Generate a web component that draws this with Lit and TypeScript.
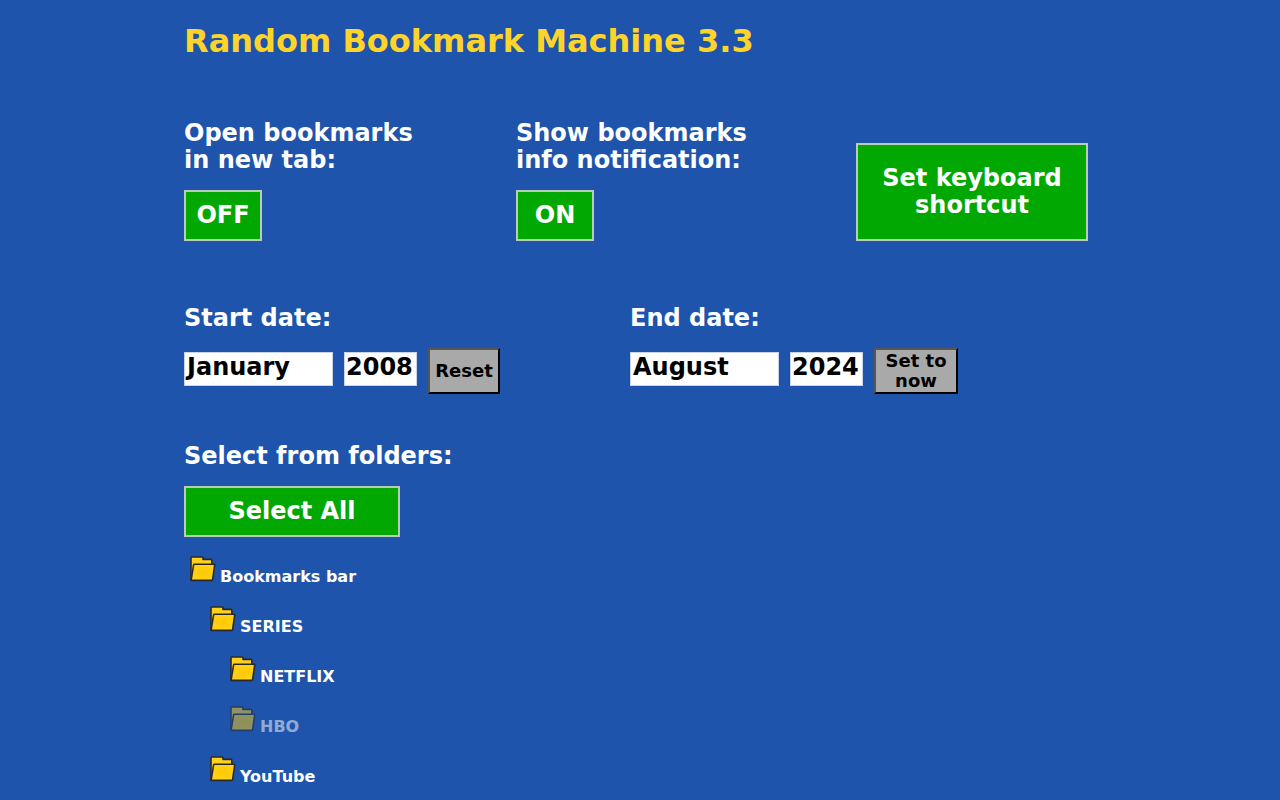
import { LitElement, html, css, svg } from "lit";
import { customElement, state } from "lit/decorators.js";
import { classMap } from "lit/directives/class-map.js";

interface Folder {
  name: string;
  depth: number;
  selected: boolean;
}

const MONTHS = [
  "January", "February", "March", "April", "May", "June", "July",
  "August", "September", "October", "November", "December",
];

const folderShapes = svg`
  <path d="M1 24.5V1.7Q1 1 1.7 1H12.2Q13 1 13 1.8V3.4H21Q21.8 3.4 21.8 4.2V8.5"
    fill="#ffd21a" stroke="#29292d" stroke-width="1.6" stroke-linejoin="round"/>
  <path d="M4.4 8.2H24Q24.8 8.2 24.7 8.9L22.6 23.6Q22.5 24.4 21.8 24.4H1.8Q1.1 24.4 1.2 23.6L3.6 8.9Q3.7 8.2 4.4 8.2Z"
    fill="url(#front)" stroke="#29292d" stroke-width="1.6" stroke-linejoin="round"/>`;

@customElement("app-root")
export class AppRoot extends LitElement {
  @state() private newTab = false;
  @state() private notify = true;
  @state() private startMonth = "January";
  @state() private startYear = "2008";
  @state() private endMonth = "August";
  @state() private endYear = "2024";
  @state() private folders: Folder[] = [
    { name: "Bookmarks bar", depth: 0, selected: true },
    { name: "SERIES", depth: 1, selected: true },
    { name: "NETFLIX", depth: 2, selected: true },
    { name: "HBO", depth: 2, selected: false },
    { name: "YouTube", depth: 1, selected: true },
  ];

  static styles = css`
    :host {
      display: block;
      box-sizing: border-box;
      min-height: 100vh;
      background: #1e54ab;
      color: #fff;
      font: bold 24px/27px "DejaVu Sans", sans-serif;
    }
    * { box-sizing: border-box; }
    .page { max-width: 912px; margin: 0 auto; padding-top: 21px; }
    .title { margin: 0 0 59px; font-size: 32px; line-height: 40px; color: #ffd42a; }
    .options {
      display: grid;
      grid-template-columns: 332fr 340fr 240fr;
      align-items: end;
      margin-bottom: 64px;
    }
    .dates {
      display: grid;
      grid-template-columns: 446fr 466fr;
      margin-bottom: 49px;
    }
    .label { display: block; margin: 0 0 16px; font: inherit; }
    .controls { display: flex; align-items: center; gap: 11px; }
    button { font: inherit; cursor: pointer; }
    .green {
      display: block;
      padding: 10px 8px;
      border: 2px solid #b8ccb8;
      background: #02a802;
      color: #fff;
    }
    .toggle { width: 78px; }
    .shortcut { width: 232px; min-height: 98px; }
    .all { width: 216px; }
    .field {
      height: 34px;
      margin: 0 0 4px;
      padding: 0 1px 4px;
      border: 1px solid #c8d4ea;
      border-radius: 0;
      background: #fff;
      color: #000;
      font: inherit;
      appearance: none;
    }
    .month { width: 149px; padding: 0 0 4px; text-indent: 2px; }
    .year { width: 73px; }
    .gray {
      height: 46px;
      padding: 0;
      border: 2px solid;
      border-color: #555 #000 #000 #555;
      background: #a9a9a9;
      color: #000;
      font-size: 18px;
      line-height: 20px;
    }
    .now { width: 84px; }
    .reset { width: 72px; }
    .folders { margin: 0; padding: 19px 0 0; list-style: none; }
    .folder {
      display: flex;
      align-items: baseline;
      gap: 4px;
      height: 50px;
      padding: 0 0 0 6px;
      border: 0;
      background: none;
      color: #fff;
      font-size: 16px;
      line-height: 20px;
    }
    .depth-1 { margin-left: 20px; }
    .depth-2 { margin-left: 40px; }
    .off { opacity: 0.5; }
    .icon { display: block; width: 26px; height: 26px; }
  `;

  private monthSelect(id: string, value: string, set: (v: string) => void) {
    return html`<select class="field month" id=${id}
      @change=${(e: Event) => set((e.target as HTMLSelectElement).value)}>
      ${MONTHS.map((m) => html`<option ?selected=${m === value}>${m}</option>`)}
    </select>`;
  }

  private toggleFolder(index: number) {
    this.folders = this.folders.map((f, i) =>
      i === index ? { ...f, selected: !f.selected } : f);
  }

  private resetStart() {
    this.startMonth = "January";
    this.startYear = "2008";
  }

  private setNow() {
    const now = new Date();
    this.endMonth = MONTHS[now.getMonth()];
    this.endYear = String(now.getFullYear());
  }

  render() {
    return html`
      <main class="page">
        <h1 class="title">Random Bookmark Machine 3.3</h1>
        <section class="options">
          <div>
            <label class="label" for="new-tab">Open bookmarks<br>in new tab:</label>
            <button class="green toggle" id="new-tab"
              @click=${() => (this.newTab = !this.newTab)}>${this.newTab ? "ON" : "OFF"}</button>
          </div>
          <div>
            <label class="label" for="notify">Show bookmarks<br>info notification:</label>
            <button class="green toggle" id="notify"
              @click=${() => (this.notify = !this.notify)}>${this.notify ? "ON" : "OFF"}</button>
          </div>
          <button class="green shortcut">Set keyboard shortcut</button>
        </section>
        <section class="dates">
          <div>
            <label class="label" for="start-month">Start date:</label>
            <div class="controls">
              ${this.monthSelect("start-month", this.startMonth, (v) => (this.startMonth = v))}
              <input class="field year" aria-label="Start year" .value=${this.startYear}
                @change=${(e: Event) => (this.startYear = (e.target as HTMLInputElement).value)}>
              <button class="gray reset" @click=${this.resetStart}>Reset</button>
            </div>
          </div>
          <div>
            <label class="label" for="end-month">End date:</label>
            <div class="controls">
              ${this.monthSelect("end-month", this.endMonth, (v) => (this.endMonth = v))}
              <input class="field year" aria-label="End year" .value=${this.endYear}
                @change=${(e: Event) => (this.endYear = (e.target as HTMLInputElement).value)}>
              <button class="gray now" @click=${this.setNow}>Set to now</button>
            </div>
          </div>
        </section>
        <section>
          <h2 class="label">Select from folders:</h2>
          <button class="green all"
            @click=${() => (this.folders = this.folders.map((f) => ({ ...f, selected: true })))}>Select All</button>
          <ul class="folders">
            ${this.folders.map((f, i) => html`
              <li>
                <button class=${classMap({
                    folder: true,
                    off: !f.selected,
                    "depth-1": f.depth === 1,
                    "depth-2": f.depth === 2,
                  })}
                  aria-pressed=${f.selected ? "true" : "false"}
                  @click=${() => this.toggleFolder(i)}>
                  <svg class="icon" viewBox="0 0 26 26" aria-hidden="true">
                    <defs>
                      <radialGradient id="front">
                        <stop offset="0" stop-color="#ffc800"></stop>
                        <stop offset="1" stop-color="#ffd21a"></stop>
                      </radialGradient>
                    </defs>
                    ${folderShapes}
                  </svg>
                  <span>${f.name}</span>
                </button>
              </li>`)}
          </ul>
        </section>
      </main>
    `;
  }
}
